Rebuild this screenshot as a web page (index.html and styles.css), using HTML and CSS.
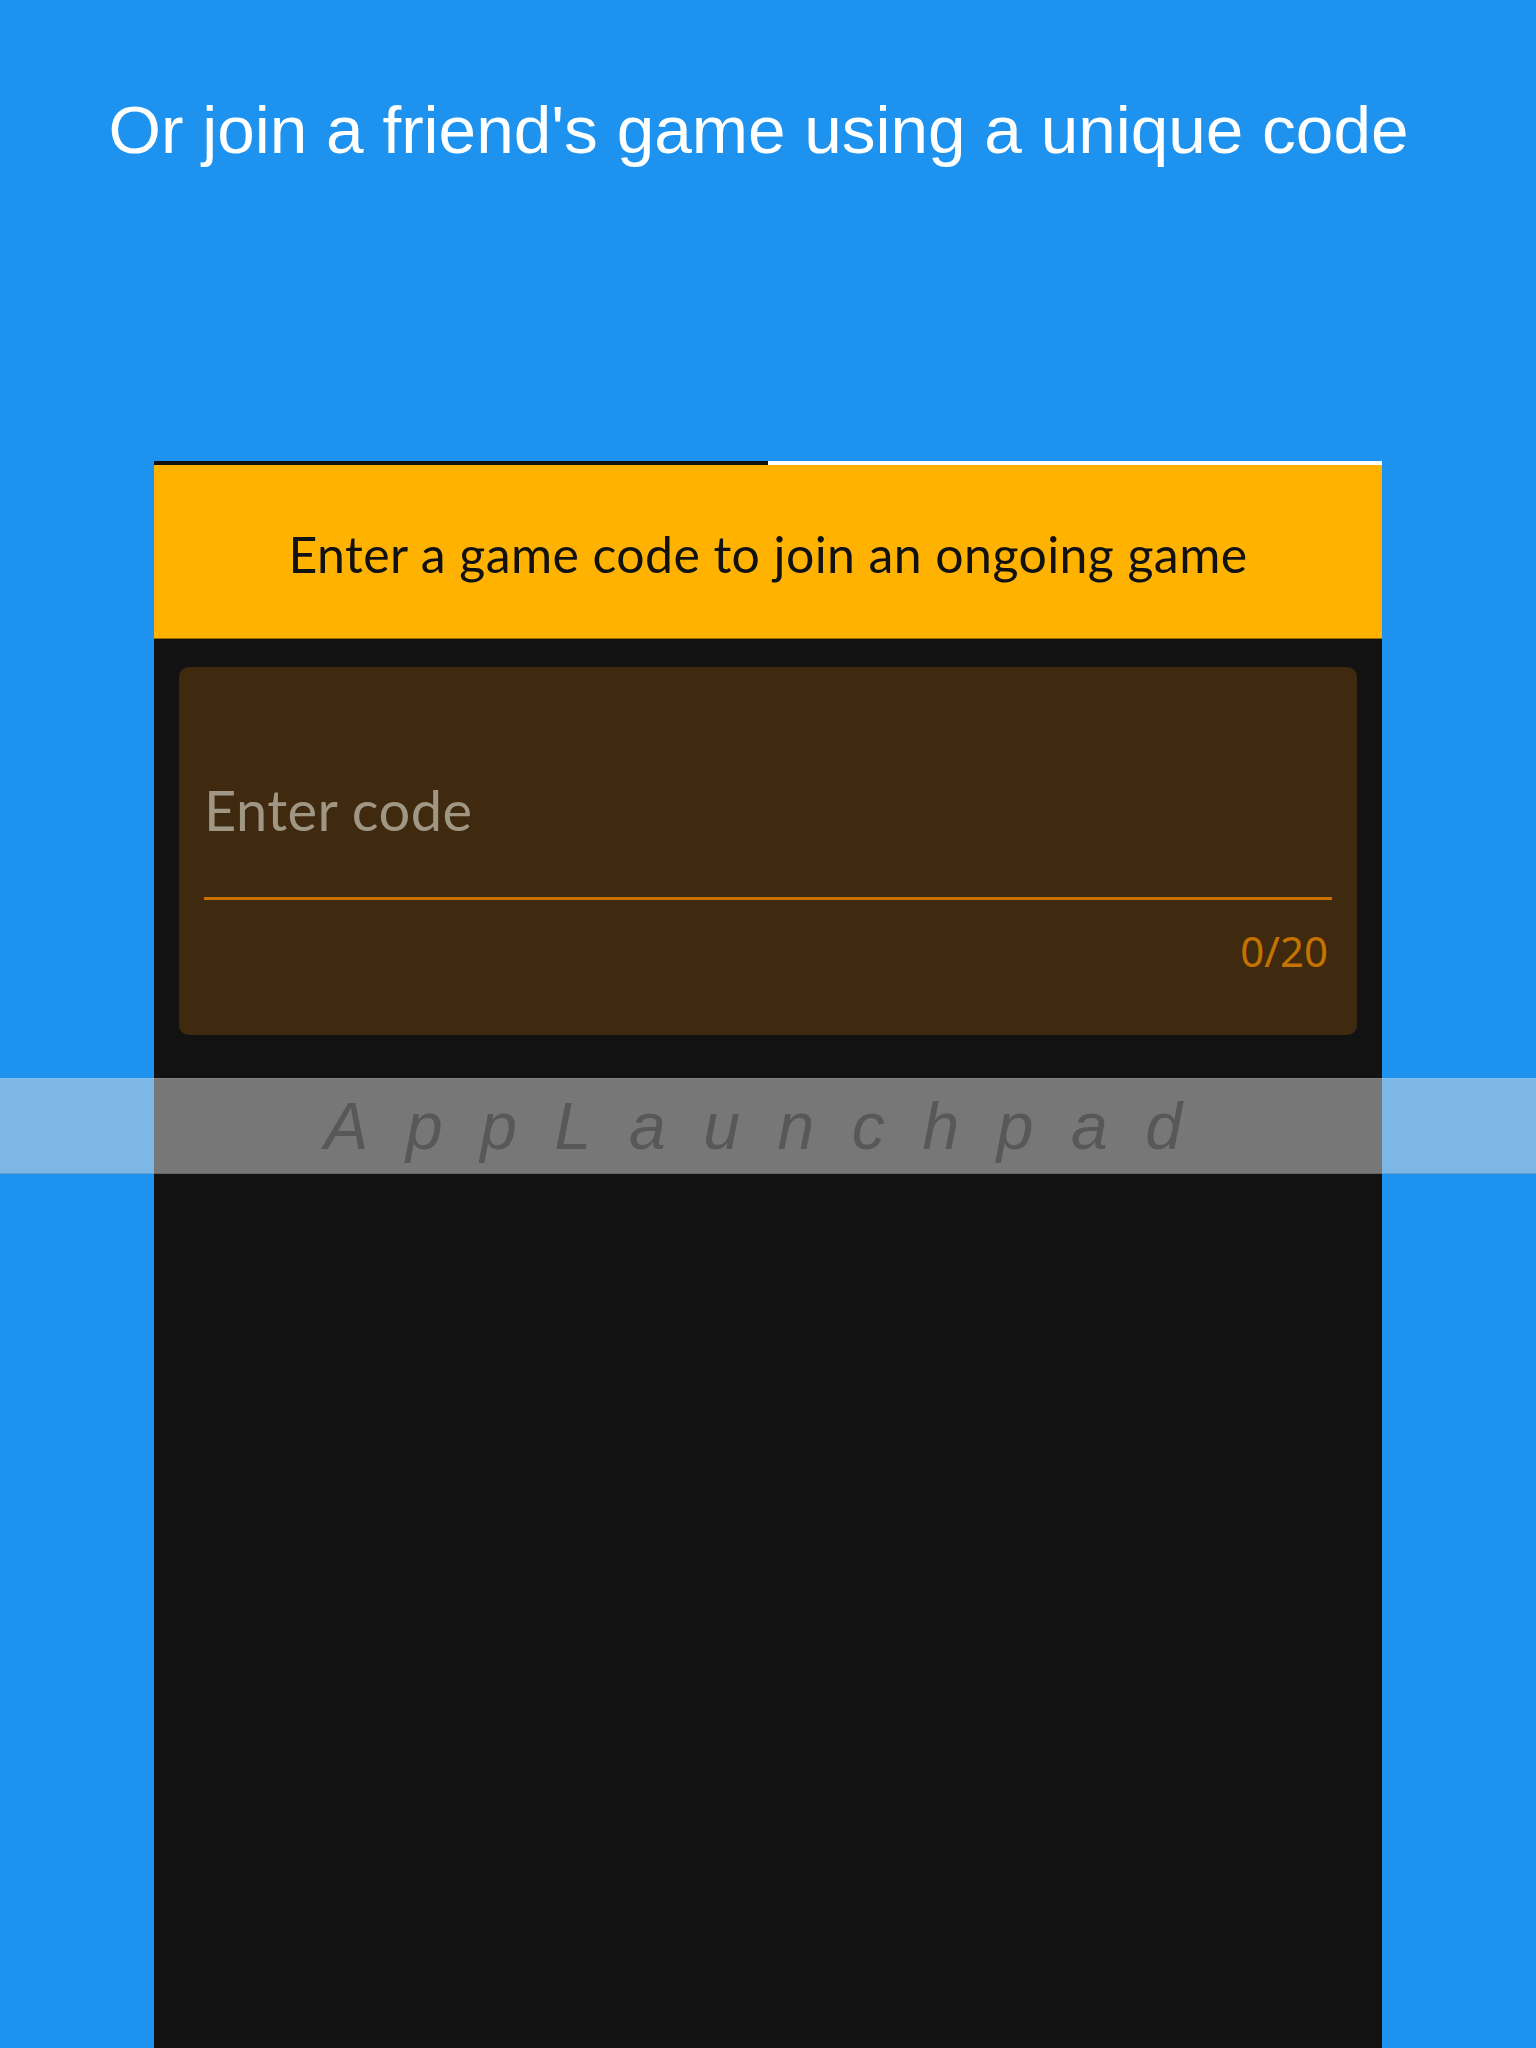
FILE: index.html
```html
<!DOCTYPE html>
<html lang="en">
<head>
<meta charset="utf-8">
<title>Join a game</title>
<link rel="stylesheet" href="styles.css">
</head>
<body>
<header class="intro">
  <h1 class="intro-title">Or join a friend's game using a unique code</h1>
</header>
<main class="phone">
  <div class="tabs">
    <div class="tab tab-active"></div>
    <div class="tab tab-idle"></div>
  </div>
  <div class="banner">
    <p class="banner-text">Enter a game code to join an ongoing game</p>
  </div>
  <section class="content">
    <div class="field">
      <div class="field-placeholder">Enter code</div>
      <div class="field-line"></div>
      <div class="field-counter">0/20</div>
    </div>
  </section>
</main>
<div class="watermark">AppLaunchpad</div>
</body>
</html>
```
FILE: styles.css
```css
html, body {
  margin: 0;
  padding: 0;
}
body {
  background: #1d92ee;
  width: 1536px;
  height: 2048px;
  overflow: hidden;
  position: relative;
  font-family: "Noto Sans", "Open Sans", sans-serif;
}
.intro {
  height: 461px;
  box-sizing: border-box;
  padding-top: 90px;
  padding-right: 19px;
}
.intro-title {
  margin: 0;
  font-family: "Liberation Sans", Arial, sans-serif;
  font-weight: 400;
  font-size: 67.5px;
  line-height: 80px;
  color: #ffffff;
  text-align: center;
  white-space: nowrap;
}
.phone {
  margin-left: 154px;
  width: 1228px;
  height: 1587px;
  background: #121212;
  display: flex;
  flex-direction: column;
}
.tabs {
  display: flex;
  height: 4px;
}
.tab {
  flex: 1;
}
.tab-active {
  background: #111111;
}
.tab-idle {
  background: #ffffff;
}
.banner {
  height: 173px;
  background: #ffb300;
  border-bottom: 1px solid #9a6c00;
  display: flex;
  align-items: center;
  justify-content: center;
}
.banner-text {
  margin: 0;
  font-family: Lato, "Noto Sans", sans-serif;
  font-size: 50px;
  line-height: 60px;
  letter-spacing: 0.4px;
  padding-top: 4px;
  color: #111111;
  white-space: nowrap;
}
.content {
  padding: 28px 25px 0;
}
.field {
  height: 368px;
  box-sizing: border-box;
  background: #402a0f;
  border-radius: 10px;
  padding: 105px 25px 0;
}
.field-placeholder {
  font-family: Lato, "Noto Sans", sans-serif;
  font-size: 56px;
  line-height: 76px;
  letter-spacing: 0.4px;
  color: #a09684;
}
.field-line {
  margin-top: 49px;
  height: 3px;
  background: #c87300;
}
.field-counter {
  margin-top: 22px;
  margin-right: 4px;
  text-align: right;
  font-size: 42px;
  line-height: 57px;
  color: #c57300;
}
.watermark {
  position: absolute;
  left: 0;
  right: 0;
  top: 1078px;
  height: 96px;
  padding-left: 8px;
  background: rgba(220, 220, 220, 0.5);
  border-top: 1px solid rgba(255, 255, 255, 0.08);
  border-bottom: 1px solid rgba(0, 0, 0, 0.15);
  box-sizing: border-box;
  display: flex;
  align-items: center;
  justify-content: center;
  font-family: "Liberation Sans", Arial, sans-serif;
  font-style: italic;
  font-size: 66px;
  letter-spacing: 37.6px;
  color: #58585a;
}
```
